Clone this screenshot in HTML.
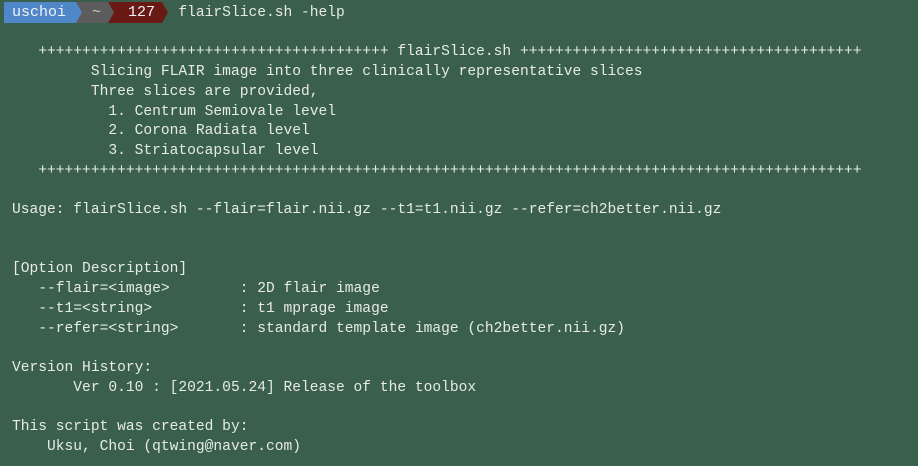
<!DOCTYPE html>
<html><head><style>
html,body{margin:0;padding:0}
body{width:918px;height:466px;background:#3b5f4d;overflow:hidden;position:relative;font-family:"Liberation Mono",monospace;color:#e6ebe6}
pre{position:absolute;left:12px;top:4px;margin:0;font-family:"Liberation Mono",monospace;font-size:14.6px;line-height:19.72px;white-space:pre}
.seg{position:absolute;top:2px;height:21px;font-size:15px;line-height:21px;color:#eef2f6}
</style></head><body>
<div class="seg" style="left:4px;width:78px;background:#4f87c9;clip-path:polygon(0 0,72px 0,78px 50%,72px 100%,0 100%);z-index:3"><span style="position:absolute;left:8px">uschoi</span></div>
<div class="seg" style="left:72px;width:42px;background:#5c5c5c;clip-path:polygon(0 0,36px 0,42px 50%,36px 100%,0 100%);z-index:2"><span style="position:absolute;left:20px;color:#ccc">~</span></div>
<div class="seg" style="left:108px;width:60px;background:#6a1a14;clip-path:polygon(0 0,54px 0,60px 50%,54px 100%,0 100%);z-index:1"><span style="position:absolute;left:20px">127</span></div>
<pre>                   flairSlice.sh -help

   ++++++++++++++++++++++++++++++++++++++++ flairSlice.sh +++++++++++++++++++++++++++++++++++++++
         Slicing FLAIR image into three clinically representative slices
         Three slices are provided,
           1. Centrum Semiovale level
           2. Corona Radiata level
           3. Striatocapsular level
   ++++++++++++++++++++++++++++++++++++++++++++++++++++++++++++++++++++++++++++++++++++++++++++++

Usage: flairSlice.sh --flair=flair.nii.gz --t1=t1.nii.gz --refer=ch2better.nii.gz


[Option Description]
   --flair=&lt;image&gt;        : 2D flair image
   --t1=&lt;string&gt;          : t1 mprage image
   --refer=&lt;string&gt;       : standard template image (ch2better.nii.gz)

Version History:
       Ver 0.10 : [2021.05.24] Release of the toolbox

This script was created by:
    Uksu, Choi (qtwing@naver.com)</pre>
</body></html>
